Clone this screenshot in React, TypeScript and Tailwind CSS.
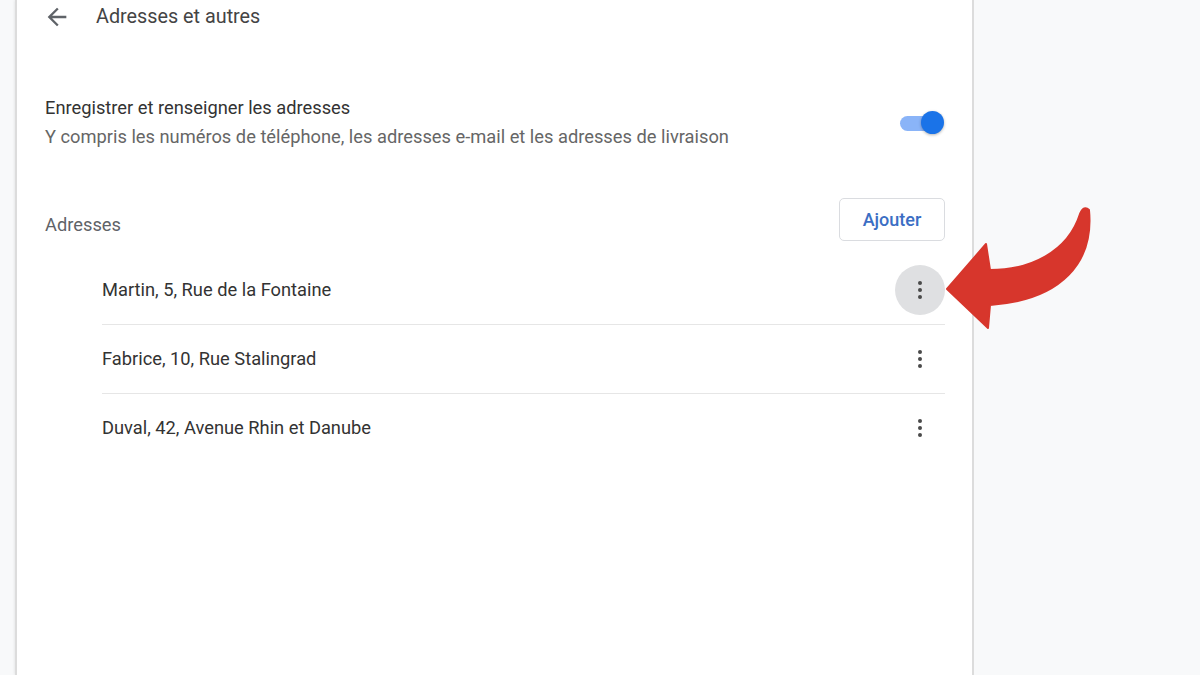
import React from "react";

function Kebab({ active }: { active?: boolean }) {
  return (
    <div
      className={
        "w-[50px] h-[50px] rounded-full flex flex-col items-center justify-center gap-[3px] " +
        (active ? "bg-[#dfe0e2]" : "")
      }
    >
      <span className="w-[4px] h-[4px] rounded-full bg-[#4a4a4a]" />
      <span className="w-[4px] h-[4px] rounded-full bg-[#4a4a4a]" />
      <span className="w-[4px] h-[4px] rounded-full bg-[#4a4a4a]" />
    </div>
  );
}

const rows = [
  "Martin, 5, Rue de la Fontaine",
  "Fabrice, 10, Rue Stalingrad",
  "Duval, 42, Avenue Rhin et Danube",
];

export default function App() {
  return (
    <div
      className="relative w-full h-[675px] overflow-hidden flex bg-[#f8f9fa]"
      style={{ fontFamily: "Roboto, 'Noto Sans', sans-serif" }}
    >
      <div className="w-[15px] shrink-0 bg-[#f8f9fa]" />
      <div className="w-[959px] shrink-0 bg-white border-l-2 border-r-2 border-[#dcdcdc] shadow-[0_0_3px_rgba(0,0,0,0.12)] pl-[28px] pr-[27px] pt-[1px]">
        <div className="h-[32px] flex items-center">
          <svg width="28" height="28" viewBox="0 0 24 24" className="ml-[-2px]">
            <path
              fill="#5f6368"
              d="M20 11H7.83l5.59-5.59L12 4l-8 8 8 8 1.41-1.41L7.83 13H20v-2z"
            />
          </svg>
          <span className="ml-[25px] text-[19.8px] text-[#444]">Adresses et autres</span>
        </div>

        <div className="mt-[60px] flex items-center">
          <div className="flex-1 text-[18.3px] leading-[29px]">
            <div className="text-[#333]">Enregistrer et renseigner les adresses</div>
            <div className="text-[#666]">
              Y compris les numéros de téléphone, les adresses e-mail et les adresses de livraison
            </div>
          </div>
          <div className="relative w-[44px] h-[24px] mr-[1px] mt-[2px]">
            <div className="absolute left-0 right-[4px] top-[5px] h-[15px] rounded-full bg-[#8ab4f8]" />
            <div className="absolute right-0 top-0 w-[23px] h-[23px] rounded-full bg-[#1a73e8] shadow-[0_1px_3px_rgba(0,0,0,0.3)]" />
          </div>
        </div>

        <div className="mt-[47px] flex items-start justify-between">
          <div className="pt-[13px] text-[18.3px] leading-[28px] text-[#5f6368]">Adresses</div>
          <div className="w-[106px] h-[43px] rounded-[5px] border border-[#dadce0] flex items-center justify-center text-[18px] font-medium text-[#3b6ec4]">
            Ajouter
          </div>
        </div>

        <div className="mt-[14px] ml-[57px]">
          {rows.map((r, i) => (
            <div
              key={r}
              className={
                "h-[69px] flex items-center justify-between " +
                (i > 0 ? "border-t border-[#e6e6e6]" : "")
              }
            >
              <span className="text-[18.3px] text-[#333]">{r}</span>
              <Kebab active={i === 0} />
            </div>
          ))}
        </div>
      </div>
      <div className="flex-1 bg-[#f8f9fa]" />

      <svg
        className="absolute left-0 top-0 pointer-events-none"
        width="1200"
        height="675"
        viewBox="0 0 1200 675"
      >
        <path
          fill="#d7362c"
          stroke="#d7362c"
          strokeWidth="2"
          strokeLinejoin="round"
          d="M947,289 L986,244 L990,270 C1030,270 1068,252 1080,214 Q1084,205 1089,210 C1094,262 1062,300 990,305 L988,328 Z"
        />
      </svg>
    </div>
  );
}
